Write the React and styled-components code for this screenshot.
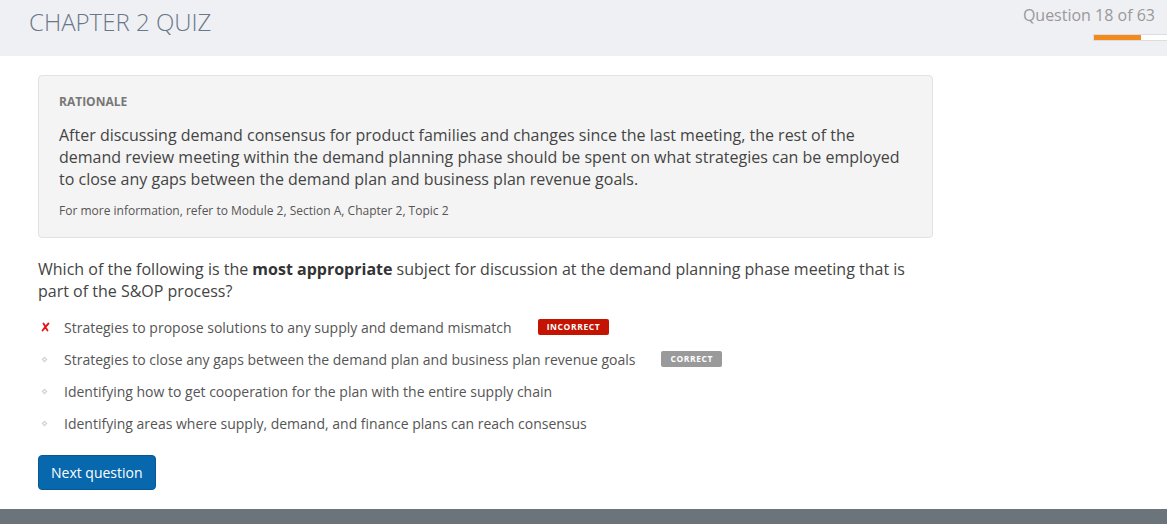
import React from "react";
import styled, { createGlobalStyle } from "styled-components";

const Global = createGlobalStyle`
  html, body { margin: 0; padding: 0; background: #fff; }
  body { font-family: "Open Sans", "Noto Sans", sans-serif; color: #444; }
  * { box-sizing: border-box; }
`;

const Page = styled.div`
  min-height: 524px;
  display: flex;
  flex-direction: column;
`;

const Header = styled.header`
  height: 56px;
  background: #eff0f4;
  display: flex;
  justify-content: space-between;
  align-items: flex-start;
  padding-left: 29px;
`;

const Title = styled.h1`
  margin: 6px 0 0;
  font-size: 24px;
  font-weight: 300;
  color: #6a7787;
  line-height: 32px;
`;

const Progress = styled.div`
  display: flex;
  flex-direction: column;
  align-items: flex-end;
  padding-top: 4px;
`;

const ProgressLabel = styled.div`
  font-size: 16px;
  color: #999;
  line-height: 22px;
  padding-right: 12px;
`;

const Bar = styled.div`
  margin-top: 8px;
  width: 74px;
  height: 7px;
  background: #fff;
  border: 1px solid #ddd;
  border-right: none;
  display: flex;
`;

const Fill = styled.div`
  background: #f28a1d;
  height: 100%;
`;

const Main = styled.main`
  flex: 1;
  padding: 19px 0 19px 38px;
  width: 933px;
`;

const Rationale = styled.section`
  background: #f4f4f4;
  border: 1px solid #e2e2e2;
  border-radius: 4px;
  padding: 18px 20px 18px;
`;

const Label = styled.div`
  font-size: 12px;
  font-weight: 700;
  color: #777;
  line-height: 16px;
`;

const RText = styled.p`
  margin: 14px 0 0;
  font-size: 16px;
  line-height: 22px;
  color: #444;
`;

const More = styled.p`
  margin: 13px 0 0;
  font-size: 12px;
  line-height: 16px;
  color: #555;
`;

const Question = styled.p`
  margin: 20px 0 0;
  font-size: 16px;
  line-height: 22px;
  color: #444;
  padding-right: 20px;
  b { color: #333; }
`;

const Options = styled.ul`
  list-style: none;
  margin: 15px 0 0;
  padding: 0;
  display: flex;
  flex-direction: column;
  gap: 12px;
`;

const Option = styled.li`
  display: flex;
  align-items: center;
  height: 20px;
  font-size: 14px;
  color: #555;
`;

const Marker = styled.span`
  width: 26px;
  flex: none;
  display: flex;
  align-items: center;
  padding-left: 3px;
`;

const Badge = styled.span`
  margin-left: 26px;
  background: ${(p) => (p.$ok ? "#9a9a9a" : "#c41300")};
  color: #fff;
  font-size: 8.5px;
  font-weight: 700;
  letter-spacing: 0.6px;
  line-height: 16px;
  height: 16px;
  padding: 0 9px;
  border-radius: 2px;
`;

const Button = styled.button`
  margin-top: 22px;
  background: #0868ad;
  color: #fff;
  border: 1px solid #055a96;
  border-radius: 4px;
  font-family: inherit;
  font-size: 14px;
  height: 35px;
  padding: 0 12px;
  cursor: pointer;
`;

const Footer = styled.footer`
  height: 15px;
  background: #6b737b;
`;

const Cross = () => (
  <svg width="9" height="10" viewBox="0 0 9 10">
    <path d="M2.5 1.5 C4 4 5 6.5 6.5 8.5 M7.5 1.5 C5.5 3.5 3.5 6 1.5 8.5" stroke="#e8141b" strokeWidth="1.8" strokeLinecap="round" fill="none" />
  </svg>
);

const Diamond = () => (
  <svg width="7" height="7" viewBox="0 0 7 7">
    <path d="M3.5 0.5 L6.5 3.5 L3.5 6.5 L0.5 3.5 Z" fill="#d4d4d4" />
    <circle cx="3.5" cy="3.5" r="1" fill="#fff" />
  </svg>
);

const options = [
  { text: "Strategies to propose solutions to any supply and demand mismatch", mark: "x", badge: "INCORRECT" },
  { text: "Strategies to close any gaps between the demand plan and business plan revenue goals", badge: "CORRECT", ok: true },
  { text: "Identifying how to get cooperation for the plan with the entire supply chain" },
  { text: "Identifying areas where supply, demand, and finance plans can reach consensus" },
];

export default function App() {
  return (
    <Page>
      <Global />
      <Header>
        <Title>CHAPTER 2 QUIZ</Title>
        <Progress>
          <ProgressLabel>Question 18 of 63</ProgressLabel>
          <Bar>
            <Fill style={{ width: `${(48 / 74) * 100}%` }} />
          </Bar>
        </Progress>
      </Header>
      <Main>
        <Rationale>
          <Label>RATIONALE</Label>
          <RText>
            After discussing demand consensus for product families and changes since the last meeting, the rest of the
            demand review meeting within the demand planning phase should be spent on what strategies can be employed
            to close any gaps between the demand plan and business plan revenue goals.
          </RText>
          <More>For more information, refer to Module 2, Section A, Chapter 2, Topic 2</More>
        </Rationale>
        <Question>
          Which of the following is the <b>most appropriate</b> subject for discussion at the demand planning phase
          meeting that is part of the S&amp;OP process?
        </Question>
        <Options>
          {options.map((o) => (
            <Option key={o.text}>
              <Marker>{o.mark === "x" ? <Cross /> : <Diamond />}</Marker>
              {o.text}
              {o.badge && <Badge $ok={o.ok}>{o.badge}</Badge>}
            </Option>
          ))}
        </Options>
        <Button>Next question</Button>
      </Main>
      <Footer />
    </Page>
  );
}
